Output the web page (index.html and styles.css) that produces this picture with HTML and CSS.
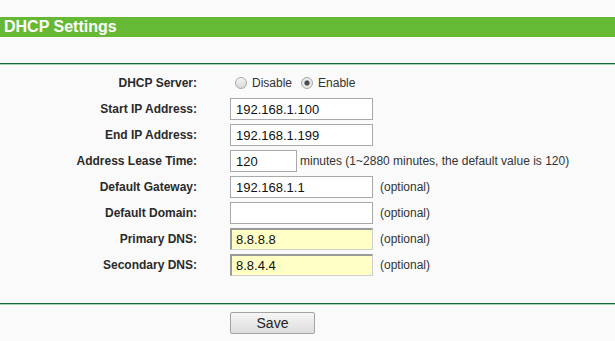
FILE: index.html
```html
<!DOCTYPE html>
<html lang="en">
<head>
    <meta charset="UTF-8">
    <meta name="viewport" content="width=device-width, initial-scale=1.0">
    <title>DHCP Settings</title>
    <link rel="stylesheet" href="styles.css">
</head>
<body>
    <!-- Title bar -->
    <h1 class="title">DHCP Settings</h1>
    <div class="rule"></div>

    <!-- Settings form -->
    <form class="panel" onsubmit="return false;">
        <div class="row">
            <span class="label">DHCP Server:</span>
            <div class="field">
                <label class="choice"><input type="radio" name="dhcp" value="0"> Disable</label>
                <label class="choice"><input type="radio" name="dhcp" value="1" checked> Enable</label>
            </div>
        </div>
        <div class="row">
            <span class="label">Start IP Address:</span>
            <div class="field"><input type="text" class="text" value="192.168.1.100"></div>
        </div>
        <div class="row">
            <span class="label">End IP Address:</span>
            <div class="field"><input type="text" class="text" value="192.168.1.199"></div>
        </div>
        <div class="row">
            <span class="label">Address Lease Time:</span>
            <div class="field">
                <input type="text" class="text short" value="120">
                <span class="hint near">minutes (1~2880 minutes, the default value is 120)</span>
            </div>
        </div>
        <div class="row">
            <span class="label">Default Gateway:</span>
            <div class="field"><input type="text" class="text" value="192.168.1.1"><span class="hint">(optional)</span></div>
        </div>
        <div class="row">
            <span class="label">Default Domain:</span>
            <div class="field"><input type="text" class="text" value=""><span class="hint">(optional)</span></div>
        </div>
        <div class="row">
            <span class="label">Primary DNS:</span>
            <div class="field"><input type="text" class="text filled" value="8.8.8.8"><span class="hint">(optional)</span></div>
        </div>
        <div class="row">
            <span class="label">Secondary DNS:</span>
            <div class="field"><input type="text" class="text filled" value="8.8.4.4"><span class="hint">(optional)</span></div>
        </div>
    </form>
    <div class="rule"></div>

    <div class="actions">
        <button class="save">Save</button>
    </div>
</body>
</html>
```

FILE: styles.css
```css
/* Base */
body {
    margin: 0;
    background-color: #fafafa;
    font-family: "Liberation Sans", Arial, sans-serif;
    font-size: 12px;
    color: #222;
}

/* Title bar */
.title {
    margin: 17px 0 0;
    padding-left: 4px;
    background-color: #66b934;
    color: #fff;
    font-size: 16px;
    line-height: 20px;
    font-weight: bold;
}

.title + .rule {
    margin-top: 26px;
}

/* Green separator lines */
.rule {
    height: 1px;
    background-color: #17693a;
    border-bottom: 1px solid #a9d4b4;
}

/* Form rows */
.panel {
    padding: 5px 0 25px;
}

.row {
    display: grid;
    grid-template-columns: 197px 1fr;
    column-gap: 33px;
    height: 26px;
    align-items: center;
}

.label {
    text-align: right;
    font-weight: bold;
    color: #2a2a2a;
}

.field {
    display: flex;
    align-items: center;
}

.text {
    box-sizing: border-box;
    width: 143px;
    height: 22px;
    margin: 0;
    padding: 0 5px;
    border: 1px solid #a9a9a9;
    background-color: #fff;
    font-family: "Liberation Sans", Arial, sans-serif;
    font-size: 13px;
    color: #111;
    outline: none;
}

.text.short {
    width: 67px;
}

.text.filled {
    background-color: #ffffc6;
    border-width: 2px 1px 1px 2px;
    border-color: #9a9a9a #d0d0d0 #d0d0d0 #9a9a9a;
    padding-left: 4px;
}

.hint {
    margin-left: 7px;
    color: #333;
}

.hint.near {
    margin-left: 3px;
}

/* Radio buttons */
.choice {
    display: inline-flex;
    align-items: center;
    margin-right: 4px;
    color: #333;
}

.choice input {
    appearance: none;
    -webkit-appearance: none;
    width: 12px;
    height: 12px;
    margin: 0 5px 0 5px;
    border: 1px solid #a8a8a8;
    border-radius: 50%;
    background: linear-gradient(#f4f4f4, #d8d8d8);
    box-sizing: border-box;
}

.choice input:checked {
    background: radial-gradient(circle, #4a4a4a 0 2px, #9a9a9a 2.6px, #eeeeee 3.2px, #dadada 100%);
}

/* Save button */
.actions {
    padding: 7px 0 0 230px;
}

.save {
    width: 85px;
    height: 22px;
    border: 1px solid #a3a3a3;
    border-radius: 2px;
    background: linear-gradient(#f5f5f5, #dddddd);
    font-family: "Liberation Sans", Arial, sans-serif;
    font-size: 14px;
    color: #222;
    cursor: pointer;
}

.save:hover {
    background: linear-gradient(#fafafa, #e6e6e6);
}
```
